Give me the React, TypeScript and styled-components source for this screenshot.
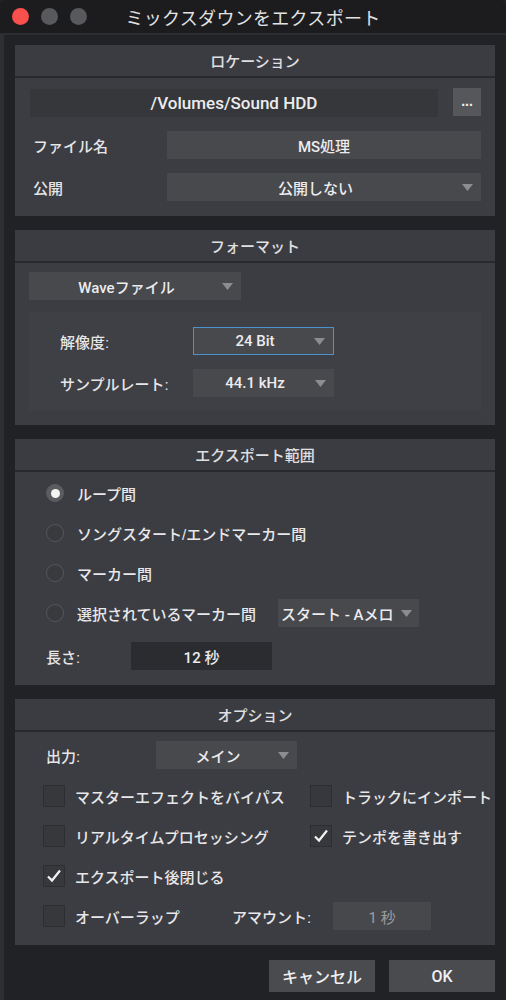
import React from 'react';
import styled, { createGlobalStyle } from 'styled-components';

const GlobalStyle = createGlobalStyle`
  html, body {
    margin: 0;
    padding: 0;
    background: #212226;
  }
  body {
    font-family: "Liberation Sans", "Noto Sans CJK JP", sans-serif;
    color: #e4e4e6;
  }
`;

const valueFont = `"Roboto", "Noto Sans CJK JP", sans-serif`;

const Arrow: React.FC = () => (
  <svg width="11" height="7" viewBox="0 0 11 7">
    <path d="M0 0 L11 0 L5.5 7 Z" fill="#8c8d91" />
  </svg>
);

const Check: React.FC = () => (
  <svg width="16" height="14" viewBox="0 0 16 14">
    <path d="M2 7.5 L6 11.5 L14 1.5" stroke="#f2f2f2" strokeWidth="2.2" fill="none" />
  </svg>
);

const App: React.FC = () => {
  return (
    <Window>
      <GlobalStyle />
      <TitleBar>
        <Lights>
          <Light color="#f8504c" />
          <Light color="#58595c" />
          <Light color="#58595c" />
        </Lights>
        <WindowTitle>ミックスダウンをエクスポート</WindowTitle>
      </TitleBar>

      <Body>
        <Section>
          <SectionHeader>ロケーション</SectionHeader>
          <SectionBody>
            <PathRow>
              <PathField>/Volumes/Sound HDD</PathField>
              <BrowseButton>...</BrowseButton>
            </PathRow>
            <FormRow>
              <FieldLabel>ファイル名</FieldLabel>
              <TextField>MS処理</TextField>
            </FormRow>
            <FormRow>
              <FieldLabel>公開</FieldLabel>
              <Select>
                <SelectText>公開しない</SelectText>
                <Arrow />
              </Select>
            </FormRow>
          </SectionBody>
        </Section>

        <Section>
          <SectionHeader>フォーマット</SectionHeader>
          <SectionBody gap={12} top={9}>
            <Select width={212}>
              <SelectText>Waveファイル</SelectText>
              <Arrow />
            </Select>
            <SubPanel>
              <SubRow>
                <FieldLabel>解像度:</FieldLabel>
                <Select width={141} focused>
                  <SelectText>24 Bit</SelectText>
                  <Arrow />
                </Select>
              </SubRow>
              <SubRow>
                <FieldLabel>サンプルレート:</FieldLabel>
                <Select width={141}>
                  <SelectText>44.1 kHz</SelectText>
                  <Arrow />
                </Select>
              </SubRow>
            </SubPanel>
          </SectionBody>
        </Section>

        <Section>
          <SectionHeader>エクスポート範囲</SectionHeader>
          <SectionBody gap={12} top={7}>
            <RadioRow>
              <Radio selected />
              <OptionLabel>ループ間</OptionLabel>
            </RadioRow>
            <RadioRow>
              <Radio />
              <OptionLabel>ソングスタート/エンドマーカー間</OptionLabel>
            </RadioRow>
            <RadioRow>
              <Radio />
              <OptionLabel>マーカー間</OptionLabel>
            </RadioRow>
            <RadioRow>
              <Radio />
              <OptionLabel>選択されているマーカー間</OptionLabel>
              <MarkerSelect>
                <MarkerText>スタート - Aメロ</MarkerText>
                <Arrow />
              </MarkerSelect>
            </RadioRow>
            <LengthRow>
              <FieldLabel>長さ:</FieldLabel>
              <DarkField>12 秒</DarkField>
            </LengthRow>
          </SectionBody>
        </Section>

        <Section>
          <SectionHeader>オプション</SectionHeader>
          <SectionBody gap={12} top={9}>
            <OutputRow>
              <FieldLabel>出力:</FieldLabel>
              <Select width={141}>
                <SelectText>メイン</SelectText>
                <Arrow />
              </Select>
            </OutputRow>
            <CheckGrid>
              <CheckItem>
                <CheckBox />
                <OptionLabel>マスターエフェクトをバイパス</OptionLabel>
              </CheckItem>
              <CheckItem>
                <CheckBox />
                <OptionLabel>トラックにインポート</OptionLabel>
              </CheckItem>
              <CheckItem>
                <CheckBox />
                <OptionLabel>リアルタイムプロセッシング</OptionLabel>
              </CheckItem>
              <CheckItem>
                <CheckBox><Check /></CheckBox>
                <OptionLabel>テンポを書き出す</OptionLabel>
              </CheckItem>
              <CheckItem>
                <CheckBox><Check /></CheckBox>
                <OptionLabel>エクスポート後閉じる</OptionLabel>
              </CheckItem>
              <div />
              <CheckItem>
                <CheckBox />
                <OptionLabel>オーバーラップ</OptionLabel>
              </CheckItem>
              <AmountItem>
                <OptionLabel>アマウント:</OptionLabel>
                <AmountField>1 秒</AmountField>
              </AmountItem>
            </CheckGrid>
          </SectionBody>
        </Section>

        <ButtonRow>
          <DialogButton>キャンセル</DialogButton>
          <DialogButton>OK</DialogButton>
        </ButtonRow>
      </Body>
    </Window>
  );
};

export default App;

const Window = styled.div`
  width: 506px;
  height: 1000px;
  display: flex;
  flex-direction: column;
  background: #212226;
  overflow: hidden;
`;

const TitleBar = styled.div`
  height: 33px;
  border-bottom: 2px solid #2c2d31;
  background: #1c1c1e;
  border-radius: 6px 6px 0 0;
  position: relative;
  display: flex;
  align-items: center;
  justify-content: center;
`;

const Lights = styled.div`
  position: absolute;
  left: 12px;
  top: 8px;
  display: flex;
  gap: 12px;
`;

const Light = styled.div<{ color: string }>`
  width: 17px;
  height: 17px;
  border-radius: 50%;
  background: ${(p) => p.color};
`;

const WindowTitle = styled.div`
  font-size: 18px;
  color: #e2e2e4;
  letter-spacing: 0.3px;
`;

const Body = styled.div`
  flex: 1;
  border-left: 4px solid #2e2f33;
  padding: 10px 11px 0 11px;
  display: flex;
  flex-direction: column;
  gap: 14px;
`;

const Section = styled.div`
  background: #3c3d42;
  display: flex;
  flex-direction: column;
`;

const SectionHeader = styled.div`
  height: 31px;
  border-bottom: 2px solid #28292d;
  display: flex;
  align-items: center;
  justify-content: center;
  font-size: 15px;
  font-weight: 500;
  color: #e0e0e2;
  background: #3b3c41;
`;

const SectionBody = styled.div<{ gap?: number; top?: number }>`
  display: flex;
  flex-direction: column;
  align-items: flex-start;
  gap: ${(p) => p.gap ?? 14}px;
  padding: ${(p) => p.top ?? 11}px 14px 15px 14px;
`;

const PathRow = styled.div`
  width: 100%;
  display: flex;
  gap: 15px;
  padding-left: 1px;
  box-sizing: border-box;
`;

const PathField = styled.div`
  flex: 1;
  height: 28px;
  background: #36373b;
  display: flex;
  align-items: center;
  justify-content: center;
  font-family: ${valueFont};
  font-size: 17px;
  font-weight: 500;
  color: #ececee;
`;

const BrowseButton = styled.div`
  width: 28px;
  height: 28px;
  margin-top: -1px;
  background: #56575b;
  color: #f0f0f0;
  font-size: 14px;
  font-weight: 700;
  display: flex;
  align-items: center;
  justify-content: center;
  line-height: 1;
  padding-bottom: 3px;
  box-sizing: border-box;
`;

const FormRow = styled.div`
  width: 100%;
  display: grid;
  grid-template-columns: 134px 1fr;
  align-items: center;
  padding-left: 4px;
  box-sizing: border-box;
`;

const FieldLabel = styled.div`
  font-size: 15px;
  font-weight: 500;
  color: #e6e6e8;
`;

const TextField = styled.div`
  height: 28px;
  background: #48494d;
  display: flex;
  align-items: center;
  justify-content: center;
  font-family: ${valueFont};
  font-size: 15px;
  font-weight: 500;
  color: #ececee;
`;

const Select = styled.div<{ width?: number; focused?: boolean }>`
  height: 28px;
  width: ${(p) => (p.width ? `${p.width}px` : 'auto')};
  box-sizing: border-box;
  background: #48494d;
  border: ${(p) => (p.focused ? '1px solid #4b93cc' : 'none')};
  display: flex;
  align-items: center;
  padding: 0 8px 0 0;
  color: #ececee;
`;

const SelectText = styled.div`
  flex: 1;
  text-align: center;
  font-family: ${valueFont};
  font-size: 15px;
  font-weight: 500;
  padding-left: 2px;
`;

const SubPanel = styled.div`
  width: 100%;
  box-sizing: border-box;
  background: #3f4045;
  padding: 15px 0 13px 31px;
  display: flex;
  flex-direction: column;
  gap: 14px;
`;

const SubRow = styled.div`
  display: grid;
  grid-template-columns: 133px auto;
  align-items: center;
`;

const RadioRow = styled.div`
  height: 28px;
  display: flex;
  align-items: center;
  padding-left: 17px;
`;

const Radio = styled.div<{ selected?: boolean }>`
  width: 18px;
  height: 18px;
  box-sizing: border-box;
  border-radius: 50%;
  background: ${(p) => (p.selected ? '#5b5c60' : '#393a3e')};
  border: 1px solid ${(p) => (p.selected ? '#5b5c60' : '#56575b')};
  display: flex;
  align-items: center;
  justify-content: center;
  margin-right: 13px;

  &::after {
    content: '';
    display: ${(p) => (p.selected ? 'block' : 'none')};
    width: 9px;
    height: 9px;
    border-radius: 50%;
    background: #f4f4f4;
  }
`;

const OptionLabel = styled.div`
  font-size: 15px;
  font-weight: 500;
  color: #e8e8ea;
  white-space: nowrap;
`;

const MarkerSelect = styled.div`
  width: 141px;
  height: 28px;
  margin-left: 22px;
  background: #48494d;
  display: flex;
  align-items: center;
  padding: 0 7px 0 3px;
  box-sizing: border-box;
`;

const MarkerText = styled.div`
  flex: 1;
  font-family: ${valueFont};
  font-size: 15px;
  font-weight: 500;
  white-space: nowrap;
  overflow: hidden;
  color: #ececee;
`;

const LengthRow = styled.div`
  margin-top: 3px;
  display: grid;
  grid-template-columns: 85px 141px;
  align-items: center;
  padding-left: 17px;
`;

const DarkField = styled.div`
  height: 28px;
  background: #2b2c30;
  display: flex;
  align-items: center;
  justify-content: center;
  font-family: ${valueFont};
  font-size: 15px;
  font-weight: 500;
  color: #ececee;
`;

const OutputRow = styled.div`
  display: grid;
  grid-template-columns: 110px auto;
  align-items: center;
  padding-left: 17px;
`;

const CheckGrid = styled.div`
  display: grid;
  grid-template-columns: 267px auto;
  row-gap: 12px;
  padding-left: 14px;
  margin-top: 1px;
`;

const CheckItem = styled.div`
  height: 28px;
  display: flex;
  align-items: center;
  gap: 10px;
`;

const CheckBox = styled.div`
  width: 22px;
  height: 22px;
  box-sizing: border-box;
  border: 1px solid #2d2e32;
  background: #37383c;
  display: flex;
  align-items: center;
  justify-content: center;
`;

const AmountItem = styled.div`
  height: 28px;
  display: flex;
  align-items: center;
  margin-left: -78px;
  gap: 22px;
`;

const AmountField = styled.div`
  width: 98px;
  height: 28px;
  background: #47484c;
  display: flex;
  align-items: center;
  justify-content: center;
  font-family: ${valueFont};
  font-size: 15px;
  color: #9c9da1;
`;

const ButtonRow = styled.div`
  display: flex;
  justify-content: flex-end;
  gap: 14px;
  margin-top: 1px;
`;

const DialogButton = styled.div`
  width: 106px;
  height: 32px;
  background: #4a4b4f;
  display: flex;
  align-items: center;
  justify-content: center;
  font-family: ${valueFont};
  font-size: 16px;
  font-weight: 500;
  color: #f0f0f2;
`;
